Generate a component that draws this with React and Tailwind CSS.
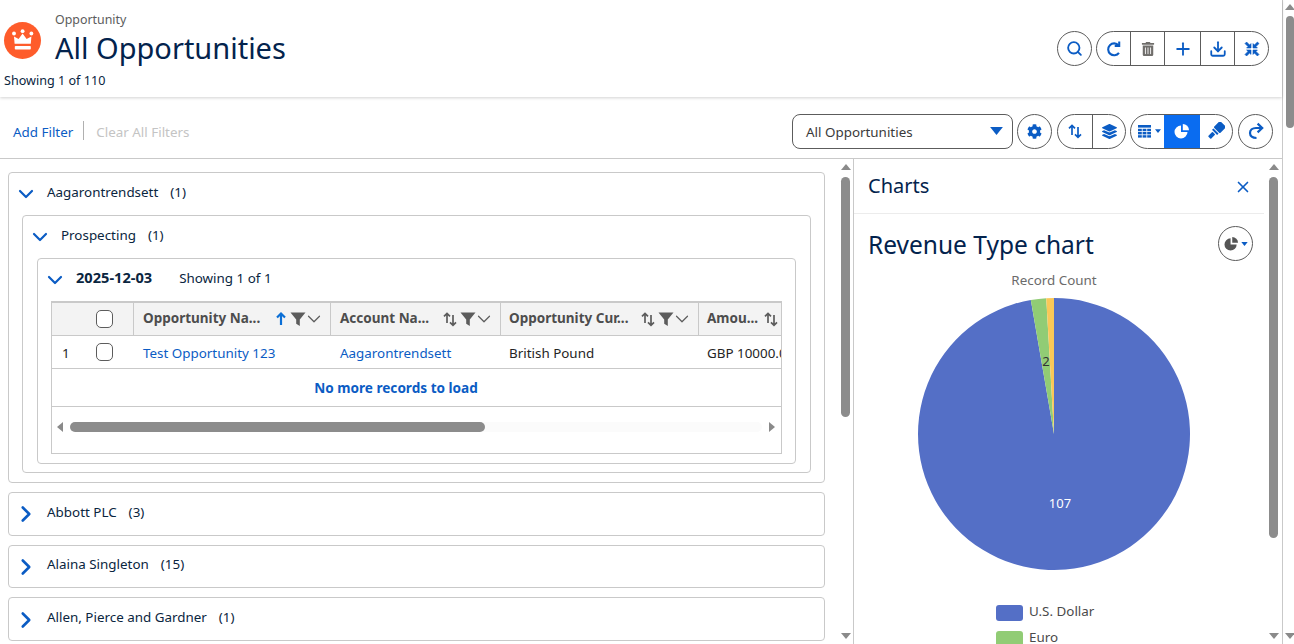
import { Search, Plus, X, Download, ChevronDown, ChevronRight } from 'lucide-react'
import { FaTrashAlt, FaCog, FaLayerGroup } from 'react-icons/fa'

const Redo = ({ size = 20 }) => (
  <svg width={size} height={size} viewBox="0 0 20 20" fill="none" stroke="currentColor" strokeWidth="2.3">
    <path d="M15.5 14.2a6.6 6.6 0 1 1-.4-8.2" />
    <path d="M15.8 1.6v5.1h-5" strokeLinejoin="miter" />
  </svg>
)

const Forward = () => (
  <svg width="18" height="18" viewBox="0 0 18 18" fill="none" stroke="currentColor" strokeWidth="2.2">
    <path d="M9.5 16C5.4 16 3 14 3 11s2.4-5 6-5h6" />
    <path d="M10.6 1.6 15.2 6l-4.6 4.4" />
  </svg>
)

const Shrink = () => (
  <svg width="16" height="16" viewBox="0 0 16 16" fill="currentColor" stroke="currentColor" strokeWidth="0.6">
    <path d="M1 2.6 2.6 1l3 3L7 2.6V7H2.6L4 5.6zM15 2.6 13.4 1l-3 3L9 2.6V7h4.4L12 5.6zM1 13.4 2.6 15l3-3L7 13.4V9H2.6L4 10.4zM15 13.4 13.4 15l-3-3L9 13.4V9h4.4L12 10.4z" />
  </svg>
)

const SortArrows = () => (
  <svg width="16" height="16" viewBox="0 0 16 16" fill="none" stroke="currentColor" strokeWidth="1.7">
    <path d="M5 12V2.5M2 5.4 5 2.4l3 3" />
    <path d="M11 4v10M8 11.4l3 3 3-3" />
  </svg>
)

const PieIcon = ({ size = 16 }) => (
  <svg width={size} height={size} viewBox="0 0 16 16" fill="currentColor">
    <path d="M7 2.5V9h6.5A6.5 6.5 0 1 1 7 2.5z" />
    <path d="M8.8 1A6.3 6.3 0 0 1 15 7.2H8.8z" />
  </svg>
)

const TableIcon = () => (
  <svg width="15" height="15" viewBox="0 0 15 15" fill="currentColor">
    <rect x="1" y="1" width="13" height="2.6" />
    {[4.8, 8, 11.2].map((y) =>
      [1, 5.6, 10.2].map((x) => <rect key={`${x}-${y}`} x={x} y={y} width="3.8" height="2.4" />)
    )}
  </svg>
)

const Brush = () => (
  <svg width="18" height="18" viewBox="0 0 18 18" fill="currentColor">
    <g transform="rotate(45 9 9)">
      <rect x="4.6" y="-1" width="8.8" height="9" rx="1" />
      <rect x="5.4" y="9" width="7.2" height="2" />
      <rect x="7" y="12" width="4" height="6.4" rx="0.8" />
    </g>
  </svg>
)

const Funnel = () => (
  <svg width="16" height="16" viewBox="0 0 16 16" fill="currentColor" className="text-[#5c5c5c] shrink-0">
    <path d="M0.5 1.5h15L9.8 8.6V15l-3.6-2.2V8.6z" />
  </svg>
)

const Caret = ({ className }) => (
  <svg width="8" height="5" viewBox="0 0 8 5" fill="currentColor" className={className}>
    <path d="M0 0h8L4 5z" />
  </svg>
)

const Arrow = ({ dir }) => {
  const d = { up: 'M5 0l5 6H0z', down: 'M0 0h10L5 6z', left: 'M6 0v10L0 5z', right: 'M0 0l6 5-6 5z' }[dir]
  const wide = dir === 'up' || dir === 'down'
  return (
    <svg width={wide ? 10 : 6} height={wide ? 6 : 10} viewBox={wide ? '0 0 10 6' : '0 0 6 10'} fill="#8a8a8a">
      <path d={d} />
    </svg>
  )
}

function Round({ children, className = '' }) {
  return (
    <button className={`w-[35px] h-[35px] shrink-0 rounded-full border border-[#5c5c5c] bg-white flex items-center justify-center text-[#0b5cc4] ${className}`}>
      {children}
    </button>
  )
}

function Group({ items }) {
  return (
    <div className="flex h-[35px] rounded-full border border-[#5c5c5c] overflow-hidden bg-white text-[#0b5cc4]">
      {items.map((it, i) => (
        <div
          key={i}
          className={`flex items-center justify-center gap-[3px] ${it.w} ${i > 0 ? 'border-l border-[#5c5c5c]' : ''} ${it.cls || ''}`}
        >
          {it.icon}
        </div>
      ))}
    </div>
  )
}

function VScroll({ thumb, className }) {
  return (
    <div className={`flex flex-col items-center justify-between shrink-0 relative ${className}`}>
      <Arrow dir="up" />
      <div className={`absolute left-0 right-0 rounded-full bg-[#8c8c8c] ${thumb}`} />
      <Arrow dir="down" />
    </div>
  )
}

const COLS = [
  { label: 'Opportunity Na...', w: 'w-[197px]', pl: 'pl-[9px]', sorted: true, cell: 'Test Opportunity 123', link: true },
  { label: 'Account Na...', w: 'w-[170px]', pl: 'pl-[9px]', cell: 'Aagarontrendsett', link: true },
  { label: 'Opportunity Cur...', w: 'w-[198px]', pl: 'pl-[8px]', cell: 'British Pound' },
  { label: 'Amou...', w: 'w-[123px]', pl: 'pl-[8px]', cell: 'GBP 10000.00' },
]

function Check() {
  return <span className="block w-[17px] h-[18px] rounded-[5px] border border-[#5c5c5c] bg-white shrink-0" />
}

function RecordTable() {
  return (
    <div className="mx-[13px] mb-[9px] h-[153px] border border-[#c9c9c9] border-t-2 overflow-hidden flex flex-col text-[13.4px]">
      <div className="flex h-[33px] bg-[#f3f3f3] border-b border-[#c9c9c9] shrink-0">
        <div className="w-[82px] shrink-0 flex items-center pl-[44px] border-r border-[#c9c9c9]">
          <Check />
        </div>
        {COLS.map((c) => (
          <div key={c.label} className={`${c.w} ${c.pl} shrink-0 flex items-center pr-[8px] border-r border-[#c9c9c9] font-bold text-[#4d4d4d]`}>
            <span className="flex-1 whitespace-nowrap text-[13.5px] leading-[18px] pb-[3px]">{c.label}</span>
            <span className={c.sorted ? 'text-[#0b6fd6]' : 'text-[#5c5c5c]'}>
              {c.sorted ? (
                <svg width="14" height="16" viewBox="0 0 14 16" fill="none" stroke="currentColor" strokeWidth="2.2">
                  <path d="M7 14V3M3 6.5l4-4 4 4" />
                </svg>
              ) : (
                <SortArrows />
              )}
            </span>
            <span className="ml-[2px]"><Funnel /></span>
            <ChevronDown size={22} strokeWidth={1.3} className="text-[#5c5c5c] -ml-[3px] -mr-[3px] shrink-0" />
          </div>
        ))}
      </div>
      <div className="flex h-[33px] border-b border-[#c9c9c9] shrink-0 items-center text-[#242424]">
        <div className="w-[82px] shrink-0 flex items-center pl-[10px] gap-[27px]">
          <span className="w-[7px] pt-[2px]">1</span>
          <Check />
        </div>
        {COLS.map((c) => (
          <div key={c.label} className={`${c.w} ${c.pl} shrink-0 pt-[2px] whitespace-nowrap ${c.link ? 'text-[#0b5cc4]' : ''}`}>
            {c.cell}
          </div>
        ))}
      </div>
      <div className="h-[38px] shrink-0 border-b border-[#c9c9c9] flex items-center justify-center font-bold text-[13.6px] text-[#0b5cc4] pr-[41px] pt-[1px]">
        No more records to load
      </div>
      <div className="flex-1 flex items-start pt-[15px] pl-[5px] pr-[6px] gap-[6px]">
        <Arrow dir="left" />
        <div className="flex-1 h-[10px] bg-[#fbfbfb] rounded-full mx-[1px]">
          <div className="w-[415px] h-[10px] rounded-full bg-[#8c8c8c]" />
        </div>
        <Arrow dir="right" />
      </div>
    </div>
  )
}

function Rowhead({ open, name, count, h = 'h-[42px]', children }) {
  return (
    <div className={`${h} flex items-center text-[13.4px] text-[#0a2540] shrink-0`}>
      <span className="w-[38px] pl-[5px] shrink-0 text-[#0b5cc4]">
        {open ? <ChevronDown size={24} strokeWidth={2.2} /> : <ChevronRight size={26} strokeWidth={2.4} className="-ml-[1px] mt-[1px]" />}
      </span>
      {children || (
        <span className="flex gap-[12px] whitespace-nowrap pb-[4px]">
          <span>{name}</span>
          <span>({count})</span>
        </span>
      )}
    </div>
  )
}

function Card({ children, className = '' }) {
  return <div className={`border border-[#c9c9c9] rounded-[4px] bg-white ${className}`}>{children}</div>
}

function PieChart() {
  const cx = 136
  const cy = 136
  const r = 136
  const pt = (deg) => {
    const a = (deg * Math.PI) / 180
    return `${cx + r * Math.sin(a)} ${cy - r * Math.cos(a)}`
  }
  const slice = (from, to) => `M${cx} ${cy}L${pt(from)}A${r} ${r} 0 ${to - from > 180 ? 1 : 0} 1 ${pt(to)}Z`
  const dollarEnd = (107 / 110) * 360
  const euroEnd = (109 / 110) * 360
  return (
    <svg width="272" height="272" viewBox="0 0 272 272" className="block">
      <path d={slice(0, dollarEnd)} fill="#546fc6" />
      <path d={slice(dollarEnd, euroEnd)} fill="#91cc75" />
      <path d={slice(euroEnd, 360)} fill="#fac858" />
      <text x="142" y="210" fill="#fff" fontSize="13" textAnchor="middle">107</text>
      <text x="128" y="68" fill="#333" fontSize="13" textAnchor="middle">2</text>
    </svg>
  )
}

export default function App() {
  return (
    <div className="w-[1294px] h-[644px] overflow-hidden flex bg-white font-['Noto_Sans',sans-serif] text-[#0a2540]">
      <div className="w-[1283px] shrink-0 flex flex-col border-r-[1px] border-[#c9c9c9] min-w-0">
        <header className="h-[97px] shrink-0 flex justify-between items-start pr-[13px] shadow-[0_1px_3px_rgba(0,0,0,0.18)] relative">
          <div className="pl-[4px] pt-[14px]">
            <div className="flex gap-[14px] items-center h-[54px]">
              <span className="w-[37px] h-[37px] -mt-[2px] rounded-full bg-[#fe5c2b] flex items-center justify-center shrink-0">
                <svg width="37" height="37" viewBox="0 0 37 37" fill="#fff">
                  <circle cx="10" cy="11.5" r="1.9" />
                  <circle cx="18.6" cy="9.2" r="1.9" />
                  <circle cx="27.4" cy="11.5" r="1.9" />
                  <path d="M10 14.5l4.6 2.6 4-5.6 4 5.6 4.8-2.6-.6 7.2H10.6z" />
                  <rect x="10.8" y="24" width="16" height="3.6" rx="0.8" />
                </svg>
              </span>
              <div className="flex flex-col">
                <span className="text-[12.4px] leading-[14px] text-[#5c5c5c]">Opportunity</span>
                <span className="text-[29px] leading-[42px] text-[#03234d] whitespace-nowrap">All Opportunities</span>
              </div>
            </div>
            <div className="text-[12.6px] leading-[16px] mt-[5px]">Showing 1 of 110</div>
          </div>
          <div className="flex gap-[4px] mt-[31px]">
            <Round><Search size={17} strokeWidth={2.6} /></Round>
            <Group
              items={[
                { w: 'w-[33px]', icon: <Redo size={18} /> },
                { w: 'w-[34px]', icon: <FaTrashAlt size={14} className="text-[#706e6b]" /> },
                { w: 'w-[36px]', icon: <Plus size={20} strokeWidth={2.2} /> },
                { w: 'w-[34px]', icon: <Download size={18} strokeWidth={2.4} /> },
                { w: 'w-[34px]', icon: <Shrink /> },
              ]}
            />
          </div>
        </header>

        <div className="h-[62px] shrink-0 flex items-center justify-between border-b border-[#c9c9c9] pl-[13px] pr-[9px] pt-[9px] pb-[2px]">
          <div className="flex items-center text-[13.4px]">
            <span className="text-[#0b5cc4] pt-[2px]">Add Filter</span>
            <span className="w-px h-[19px] bg-[#b0b0b0] ml-[10px] mr-[12px]" />
            <span className="text-[#c4c4c4] pt-[2px]">Clear All Filters</span>
          </div>
          <div className="flex items-center gap-[4px]">
            <div className="w-[221px] h-[35px] rounded-[8px] border border-[#5c5c5c] flex items-center justify-between pl-[13px] pr-[9px] text-[13.4px] text-[#3a3a3a]">
              <span className="pt-[2px]">All Opportunities</span>
              <Caret className="w-[13px] h-[8px] text-[#0b5cc4]" />
            </div>
            <Round><FaCog size={15} /></Round>
            <div className="ml-[1px]">
              <Group
                items={[
                  { w: 'w-[34px]', icon: <SortArrows /> },
                  { w: 'w-[33px]', icon: <FaLayerGroup size={15} /> },
                ]}
              />
            </div>
            <Group
              items={[
                { w: 'w-[33px] pl-[3px]', icon: <><TableIcon /><Caret className="w-[6px] h-[4px]" /></> },
                { w: 'w-[36px]', cls: 'bg-[#0a6cf0] text-white !border-l-0', icon: <PieIcon /> },
                { w: 'w-[32px]', cls: '!border-l-0', icon: <Brush /> },
              ]}
            />
            <Round className="ml-[1px]"><Forward /></Round>
          </div>
        </div>

        <div className="flex-1 min-h-0 flex">
          <div className="w-[854px] shrink-0 flex border-r border-[#c9c9c9] pt-[5px] pb-[5px] overflow-hidden">
            <div className="w-[825px] shrink-0 pl-[8px] pt-[8px] flex flex-col gap-[9px]">
              <Card>
                <Rowhead open name="Aagarontrendsett" count="1" />
                <Card className="mx-[13px] mb-[9px]">
                  <Rowhead open name="Prospecting" count="1" />
                  <Card className="mx-[14px] mb-[8px]">
                    <Rowhead open>
                      <span className="flex gap-[27px] whitespace-nowrap items-baseline pb-[4px]">
                        <b className="text-[14.6px] text-[#0a2540]">2025-12-03</b>
                        <span>Showing 1 of 1</span>
                      </span>
                    </Rowhead>
                    <RecordTable />
                  </Card>
                </Card>
              </Card>
              {[
                ['Abbott PLC', '3'],
                ['Alaina Singleton', '15'],
                ['Allen, Pierce and Gardner', '1'],
              ].map(([name, count]) => (
                <Card key={name}>
                  <Rowhead name={name} count={count} h="h-[41.67px]" />
                </Card>
              ))}
            </div>
            <VScroll className="w-[9px] ml-[16px]" thumb="top-[13px] h-[240px]" />
          </div>

          <div className="flex-1 min-w-0 flex pt-[5px] pb-[5px] overflow-hidden">
            <div className="w-[410px] shrink-0 flex flex-col">
              <div className="h-[50px] shrink-0 border-b border-[#ececec] flex items-center justify-between pl-[14px] pr-[12px] pb-[4px]">
                <span className="text-[20px] leading-[28px] text-[#03234d] pb-[2px]">Charts</span>
                <X size={18} strokeWidth={2.2} className="text-[#0b5cc4]" />
              </div>
              <div className="flex items-center justify-between pl-[14px] pr-[11px] pt-[12px]">
                <span className="text-[24.5px] leading-[33px] text-[#03234d] pt-[2px]">Revenue Type chart</span>
                <span className="w-[35px] h-[35px] rounded-full border border-[#5c5c5c] flex items-center justify-center gap-[2px] text-[#555]">
                  <PieIcon size={15} />
                  <Caret className="w-[7px] h-[4px] text-[#0b5cc4]" />
                </span>
              </div>
              <div className="w-[272px] ml-[64px]">
                <div className="text-center text-[13.4px] leading-[18px] text-[#6b6b6b] mt-[10px] mb-[9px]">Record Count</div>
                <PieChart />
              </div>
              <div className="mt-[35px] pl-[142px] flex flex-col gap-[10px] text-[13.4px] text-[#4a4a4a]">
                {[
                  ['U.S. Dollar', 'bg-[#546fc6]'],
                  ['Euro', 'bg-[#91cc75]'],
                ].map(([label, bg]) => (
                  <div key={label} className="flex items-center gap-[6px] h-[16px]">
                    <span className={`w-[27px] h-[16px] rounded-[3px] ${bg}`} />
                    <span className="pb-[3px]">{label}</span>
                  </div>
                ))}
              </div>
            </div>
            <VScroll className="w-[9px] ml-[5px]" thumb="top-[13px] h-[361px]" />
          </div>
        </div>
      </div>
      <VScroll className="w-[8px] ml-[3px] pt-[4px] pb-[5px]" thumb="top-[16px] h-[112px]" />
    </div>
  )
}
